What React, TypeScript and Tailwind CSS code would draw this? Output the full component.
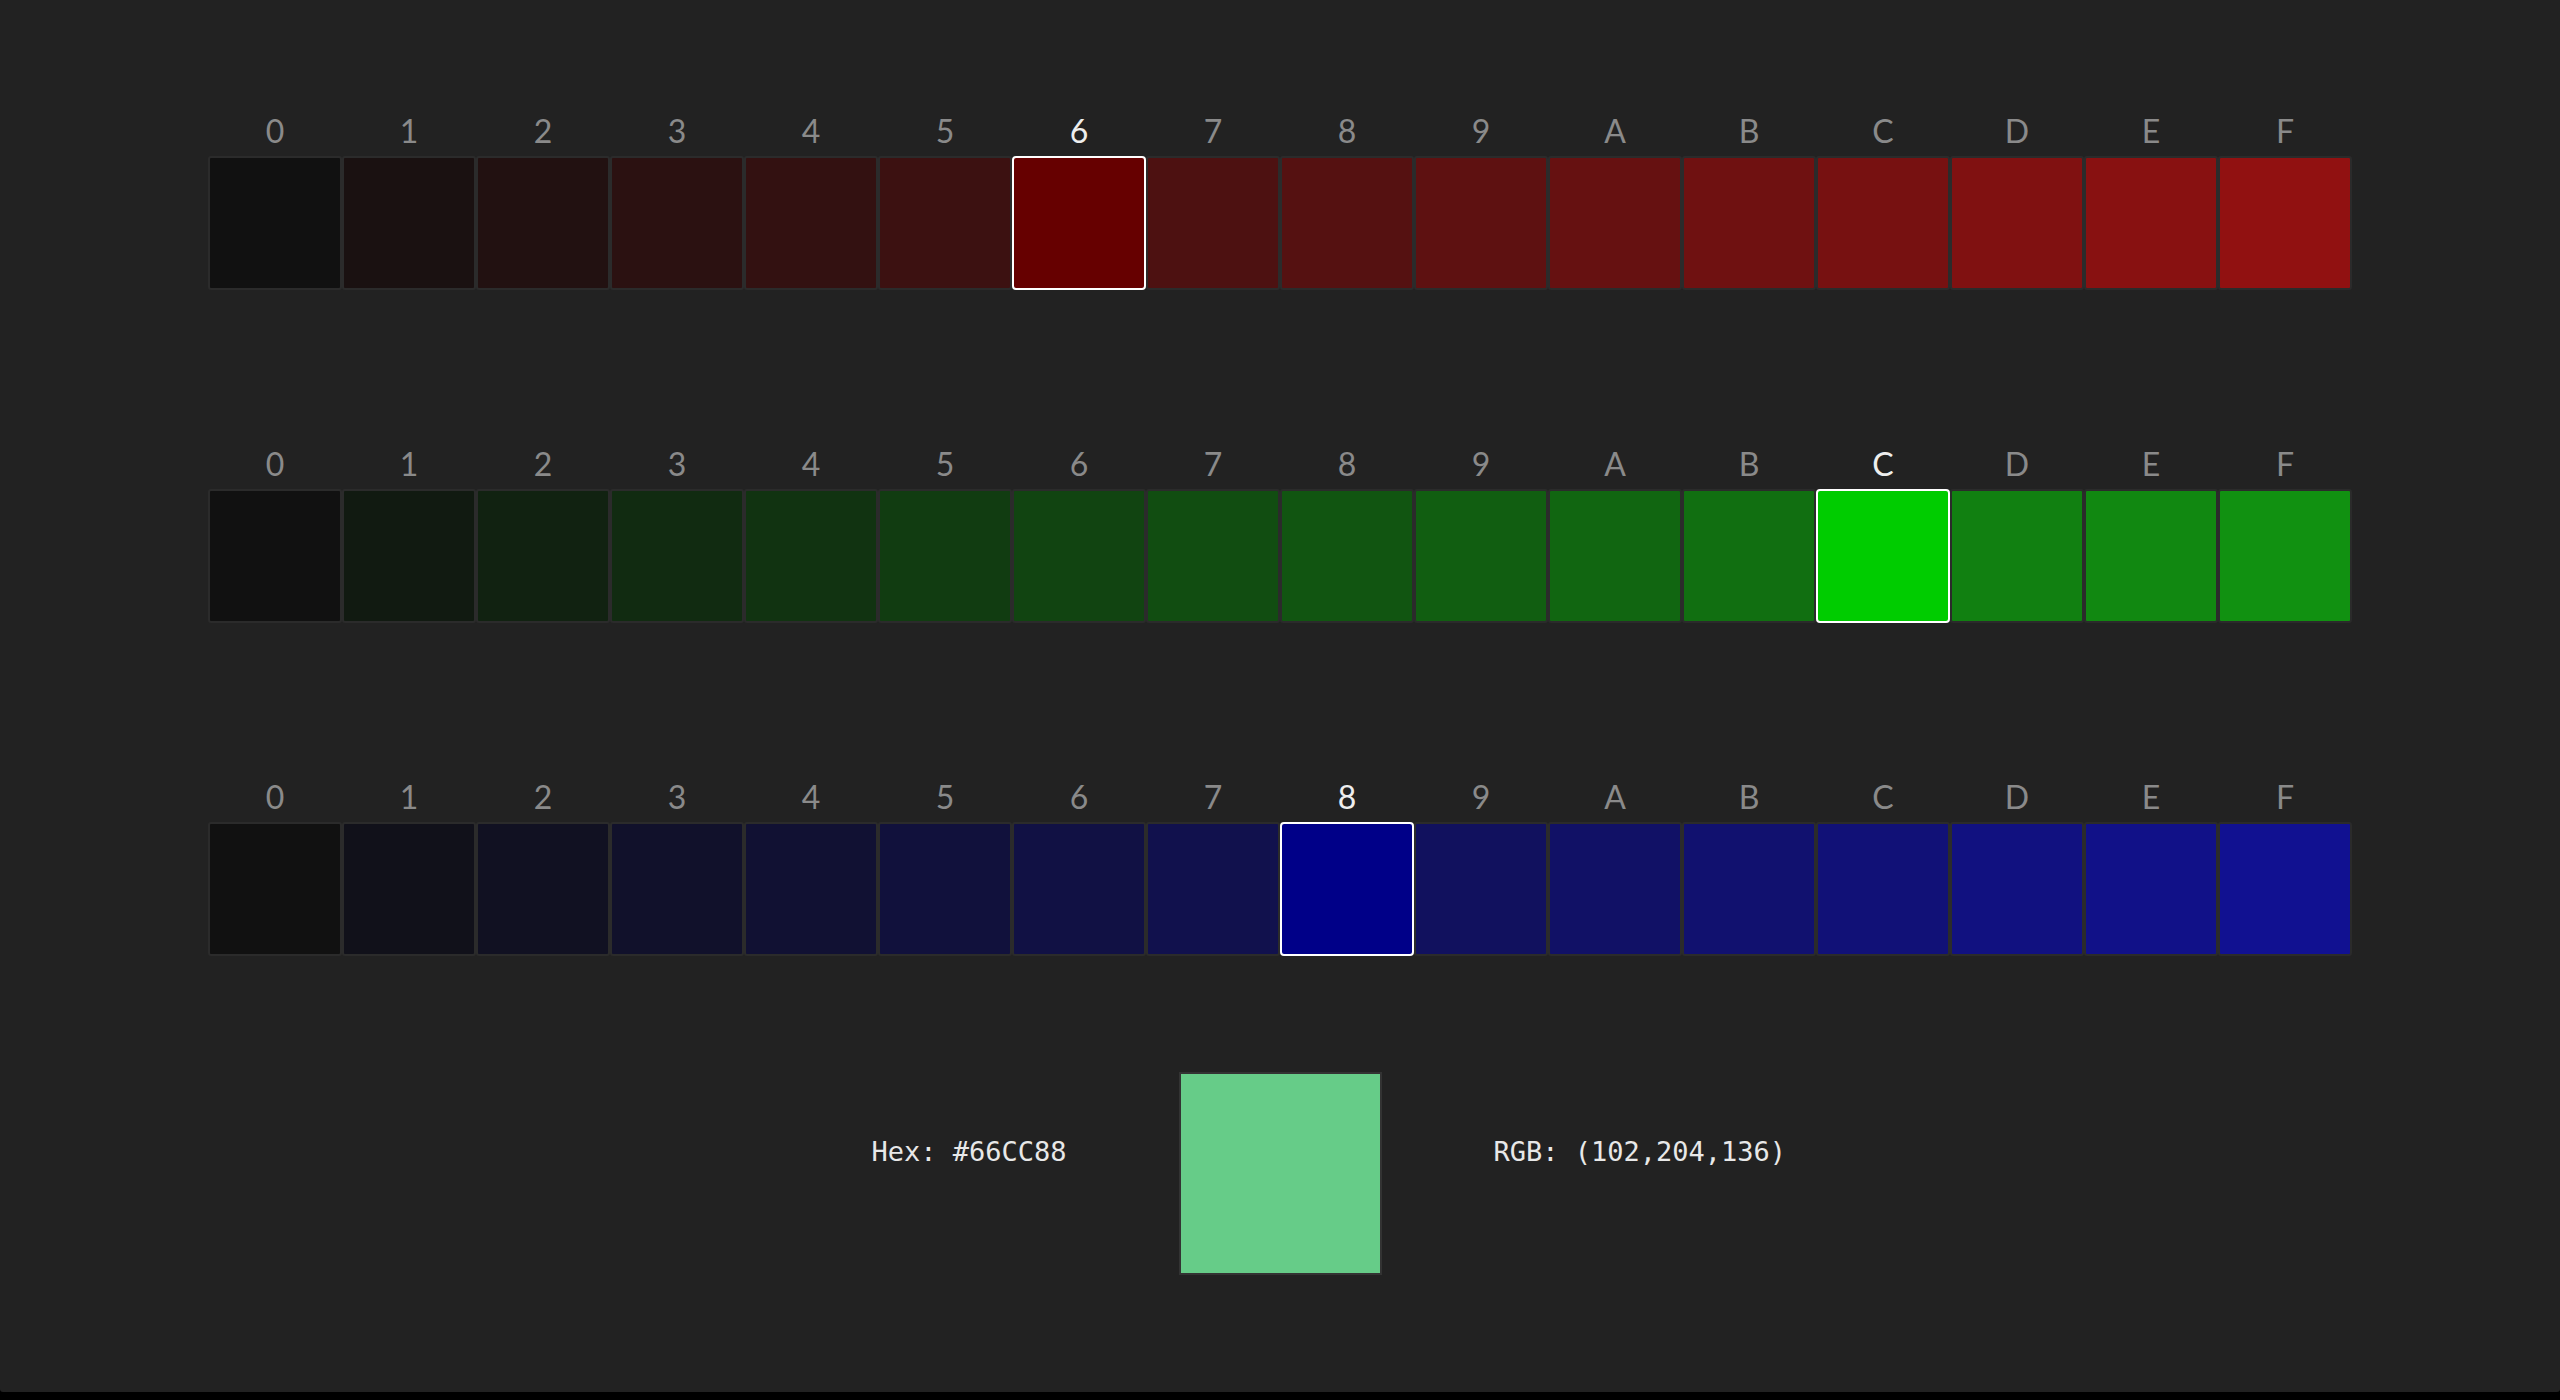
const HEX = ['0', '1', '2', '3', '4', '5', '6', '7', '8', '9', 'A', 'B', 'C', 'D', 'E', 'F'];

type Channel = 'r' | 'g' | 'b';

const rows: { channel: Channel; selected: number }[] = [
  { channel: 'r', selected: 6 },
  { channel: 'g', selected: 12 },
  { channel: 'b', selected: 8 },
];

// unselected swatches are the channel at half strength over the #222 page
function swatchColor(channel: Channel, i: number, selected: boolean) {
  const full = i * 17;
  const v = selected ? full : Math.round(full * 0.5 + 17);
  const o = selected ? 0 : 17;
  const r = channel === 'r' ? v : o;
  const g = channel === 'g' ? v : o;
  const b = channel === 'b' ? v : o;
  return `rgb(${r},${g},${b})`;
}

const SwatchRow = ({ channel, selected }: { channel: Channel; selected: number }) => {
  return (
    <div className="w-[2144px] mx-auto">
      <div className="flex">
        {HEX.map((h, i) => (
          <div
            key={h}
            className={`w-[134px] h-10 flex items-center justify-center text-[32px] leading-10 ${
              i === selected ? 'text-[#eeeeee]' : 'text-[#8a8a8a]'
            }`}
          >
            {h}
          </div>
        ))}
      </div>
      <div className="flex mt-[5px]">
        {HEX.map((h, i) => (
          <div
            key={h}
            className={`w-[134px] h-[134px] border-2 ${
              i === selected ? 'border-white rounded-[4px]' : 'border-[#2b2b2b] rounded-[3px]'
            }`}
            style={{ backgroundColor: swatchColor(channel, i, i === selected) }}
          />
        ))}
      </div>
    </div>
  );
};

export default function App() {
  return (
    <div className="min-h-screen bg-black">
      <div
        className="h-[1392px] bg-[#222222] pt-[111px] rounded-b-[3px]"
        style={{ fontFamily: 'Lato, "Open Sans", sans-serif' }}
      >
        <div className="flex flex-col gap-[154px]">
          {rows.map((r) => (
            <SwatchRow key={r.channel} channel={r.channel} selected={r.selected} />
          ))}
        </div>
        <div
          className="mt-[116px] grid grid-cols-[1fr_auto_1fr] gap-x-[112px] items-center text-[27px] text-[#e8e8e8]"
          style={{ fontFamily: '"DejaVu Sans Mono", "Liberation Mono", monospace' }}
        >
          <div className="justify-self-end whitespace-pre mb-[42px]">Hex: #66CC88</div>
          <div className="w-[203px] h-[203px] border-2 border-[#333333] bg-[#66cc88]" />
          <div className="justify-self-start whitespace-pre mb-[42px]">RGB: (102,204,136)</div>
        </div>
      </div>
    </div>
  );
}
